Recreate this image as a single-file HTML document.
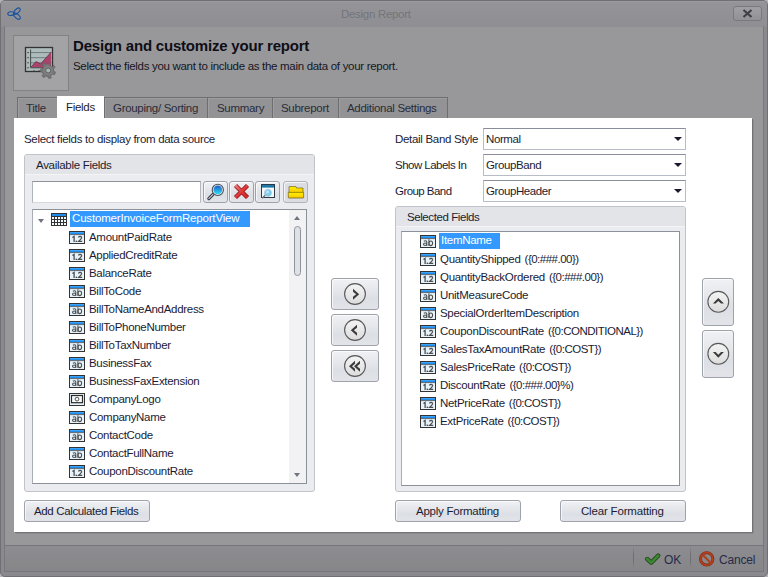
<!DOCTYPE html>
<html><head><meta charset="utf-8">
<style>
*{box-sizing:border-box;margin:0;padding:0}
html,body{width:768px;height:577px;overflow:hidden;background:#b4b4b8}
body{font-family:"Liberation Sans",sans-serif;font-size:11.5px;letter-spacing:-0.3px;color:#1a1c34;position:relative}
.a{position:absolute}
.t{position:absolute;white-space:nowrap;line-height:14px}
#win{left:0;top:0;width:768px;height:577px;border-radius:5px;background:#8a8a8e;border:1px solid #707074}
#title{left:1px;top:1px;width:766px;height:26px;border-radius:4px 4px 0 0;background:linear-gradient(#9c9ca0,#949498 8%,#8f8f93)}
#frameL{left:4px;top:26px;width:1px;height:546px;background:#7a7a7e}
#frameR{left:763px;top:26px;width:1px;height:546px;background:#7a7a7e}
#body{left:5px;top:27px;width:758px;height:518px;background:#98989b}
#foot{left:5px;top:545px;width:758px;height:27px;background:linear-gradient(#8d8d91,#868689);border-top:1px solid #77777b;border-bottom:1px solid #77777b}
#frameB{left:4px;top:571px;width:760px;height:1px;background:#7a7a7e}
.tab{position:absolute;top:97px;height:21px;background:#939396;border:1px solid #6e6e72;border-bottom:none;color:#2a2c38;box-shadow:inset 1px 1px 0 #9e9ea2}
.tab span{position:absolute;top:3px;white-space:nowrap;line-height:14px}
#panel{left:14px;top:118px;width:738px;height:414px;background:#fff;box-shadow:1px 1px 0 #727276,2px 2px 0 #8c8c90}
.grp{position:absolute;border:1px solid #c0c3ca;border-radius:3px;background:#ebecf0}
.grph{position:absolute;left:0;top:0;right:0;height:20px;background:#e3e4e8;border-bottom:1px solid #f4f4f6;border-radius:2px 2px 0 0}
.box{position:absolute;background:#fff;border:1px solid #a9adb6;border-top-color:#8c9099;border-right-color:#8c9099;border-bottom-color:#8c9099}
.btn{position:absolute;border:1px solid #9ea2aa;border-radius:3px;background:linear-gradient(#f0f1f4,#e6e8ec 35%,#dcdfe5 65%,#e2e4e9);box-shadow:inset 1px 1px 0 rgba(255,255,255,0.7)}
.btn span{position:absolute;white-space:nowrap;line-height:14px}
.dd{position:absolute;left:483px;width:203px;height:22px;background:#fff;border:1px solid #b8bcc6;border-top-color:#8a8e9a}
.dd span{position:absolute;left:2px;letter-spacing:-0.4px;top:3px;white-space:nowrap;line-height:14px}
.dd i{position:absolute;left:190px;top:8px;width:0;height:0;border-left:4px solid transparent;border-right:4px solid transparent;border-top:4px solid #1a1a2e}
.row{position:absolute;height:18px}
.row svg{position:absolute;left:0;top:3px}
.row span{position:absolute;left:20px;top:2px;white-space:nowrap;line-height:14px}
.sel{background:#3399ff;color:#fff;padding:0 0 0 2px;width:61px;left:19px!important;top:1px!important;height:16px;line-height:15px!important}
</style></head><body>
<div id="win" class="a"></div>
<div id="title" class="a"></div>
<div id="body" class="a"></div>
<div id="frameL" class="a"></div>
<div id="frameR" class="a"></div>
<div id="foot" class="a"></div>

<!-- logo -->
<svg class="a" style="left:4px;top:4px" width="20" height="20" viewBox="0 0 20 20">
 <g fill="none" stroke="#1a52a0" stroke-width="1.3" transform="translate(10 9.6) scale(0.87) translate(-10 -9.4)">
  <ellipse cx="13.3" cy="6.6" rx="4.6" ry="2.3" transform="rotate(-44 13.3 6.6)"/>
  <ellipse cx="13.3" cy="12.3" rx="4.7" ry="2.3" transform="rotate(42 13.3 12.3)"/>
  <ellipse cx="6.6" cy="9.4" rx="3.8" ry="2.1" transform="rotate(-6 6.6 9.4)"/>
 </g>
</svg>
<div class="t" style="left:341px;top:7px;color:#74747a;font-size:11.5px">Design Report</div>
<!-- close -->
<div class="a" style="left:733px;top:6px;width:29px;height:15px;border:1px solid #7a7a7e;border-radius:3px;background:linear-gradient(#a0a0a4,#929296)"></div>
<svg class="a" style="left:742px;top:9px" width="11" height="9" viewBox="0 0 11 9"><path d="M1.5 1 L9.5 8 M9.5 1 L1.5 8" stroke="#404048" stroke-width="2.3"/></svg>

<!-- header -->
<div class="a" style="left:13px;top:35px;width:56px;height:56px;background:#a3a3a6;border:1px solid #828286"></div>
<svg class="a" style="left:24px;top:46px" width="34" height="34" viewBox="0 0 34 34">
 <rect x="1.5" y="1.5" width="27" height="24" fill="#aebcbc" stroke="#333" stroke-width="1.3"/>
 <path d="M6.5 6.6 H27.5 M6.5 11.7 H27.5 M6.5 16.8 H27.5" stroke="#5e6a6a" stroke-width="0.8"/>
 <path d="M3.2 6.6 H5 M3.2 11.7 H5 M3.2 16.8 H5 M3.2 21.8 H5 M10 24 V25 M15 24 V25" stroke="#444" stroke-width="0.9"/>
 <path d="M7 21 L12 15.5 L16.5 18 L27 6.2 V21.5 H7 Z" fill="#a8446c"/>
 <path d="M7 21 L12 15.5 L16.5 18 L27 6.2" fill="none" stroke="#5a2a40" stroke-width="0.7"/>
 <path d="M6.6 3.5 V21.8 H27.5" fill="none" stroke="#3a4040" stroke-width="0.9"/>
 <g transform="translate(24.2 24.5) scale(0.88)">
  <path d="M-1.6 -8 H1.6 L2 -5.4 L4.3 -4.4 L6.3 -6 L8 -3.7 L6 -1.8 L6.3 0.6 L8.5 2 L7.2 4.8 L4.7 4.3 L3 6.2 L3.5 8.6 L0.5 9 L-0.6 6.8 L-3 6.4 L-4.8 8.2 L-7.2 6.3 L-5.8 4.2 L-6.6 1.9 L-8.8 1.3 L-8.6 -1.8 L-6.2 -2.3 L-5.4 -4.6 L-6.8 -6.7 L-4.2 -8.2 L-2.4 -6.4 Z" fill="#767676" stroke="#5a5a5a" stroke-width="0.6"/>
  <circle cx="0" cy="0" r="5.4" fill="#808080"/>
  <circle cx="0" cy="0" r="2.8" fill="#a8b8b8" stroke="#4a4a4a" stroke-width="0.8"/>
 </g>
</svg>
<div class="t" style="left:73px;top:37px;font-size:15px;font-weight:bold;letter-spacing:-0.2px;color:#0e0e16;line-height:18px">Design and customize your report</div>
<div class="t" style="left:73px;top:59px;color:#16161e">Select the fields you want to include as the main data of your report.</div>

<!-- tabs -->
<div class="tab" style="left:17px;width:41px"><span style="left:8px">Title</span></div>
<div class="tab" style="left:104px;width:104px"><span style="left:8px">Grouping/ Sorting</span></div>
<div class="tab" style="left:207px;width:66px"><span style="left:9px">Summary</span></div>
<div class="tab" style="left:272px;width:67px"><span style="left:8px">Subreport</span></div>
<div class="tab" style="left:338px;width:110px"><span style="left:8px">Additional Settings</span></div>
<div class="a" style="left:57px;top:96px;width:47px;height:23px;background:#fff"></div>
<div class="t" style="left:66px;top:100px;color:#1c1e2a">Fields</div>

<div id="panel" class="a"></div>

<div class="t" style="left:24px;top:132px">Select fields to display from data source</div>

<!-- Available fields group -->
<div class="grp" style="left:24px;top:154px;width:291px;height:338px"><div class="grph"></div></div>
<div class="t" style="left:36px;top:158px">Available Fields</div>
<div class="box" style="left:32px;top:181px;width:169px;height:22px;border-color:#8e929b #b4b8c0 #d6d8de #b0b4bc"></div>
<div class="btn" style="left:203px;top:181px;width:25px;height:22px"></div>
<div class="btn" style="left:229px;top:181px;width:25px;height:22px"></div>
<div class="btn" style="left:255px;top:181px;width:25px;height:22px"></div>
<div class="btn" style="left:283px;top:181px;width:25px;height:22px;background:#dcdde2;border-color:#b0b3ba"></div>
<!-- toolbar icons -->
<svg class="a" style="left:203px;top:181px" width="26" height="22" viewBox="0 0 26 22">
 <defs><linearGradient id="lens" x1="0" y1="0" x2="0" y2="1"><stop offset="0" stop-color="#1a5ac8"/><stop offset="1" stop-color="#2ee0f8"/></linearGradient>
 <linearGradient id="red" x1="0" y1="0" x2="1" y2="1"><stop offset="0" stop-color="#f08080"/><stop offset="0.5" stop-color="#e03838"/><stop offset="1" stop-color="#d02828"/></linearGradient>
 <linearGradient id="fold" x1="0" y1="0" x2="0" y2="1"><stop offset="0" stop-color="#fff000"/><stop offset="0.45" stop-color="#f0a000"/><stop offset="0.55" stop-color="#ffe000"/><stop offset="1" stop-color="#f8d000"/></linearGradient></defs>
 <path d="M5.8 17.6 L10 13.4" stroke="#2a3038" stroke-width="3" stroke-linecap="round"/>
 <path d="M5.8 17.6 L10 13.4" stroke="#c8d0d8" stroke-width="1.2" stroke-linecap="round"/>
 <circle cx="14.8" cy="8.9" r="5.6" fill="#e8eaee" stroke="#4a5058" stroke-width="1.1"/>
 <circle cx="14.8" cy="8.9" r="4.3" fill="url(#lens)"/>
</svg>
<svg class="a" style="left:229px;top:181px" width="26" height="22" viewBox="0 0 26 22">
 <path d="M6.5 4.5 L18.5 16.5 M18.5 4.5 L6.5 16.5" stroke="#981818" stroke-width="4.4"/>
 <path d="M6.5 4.5 L18.5 16.5 M18.5 4.5 L6.5 16.5" stroke="url(#red)" stroke-width="2.6"/>
</svg>
<svg class="a" style="left:255px;top:181px" width="26" height="22" viewBox="0 0 26 22">
 <rect x="6.5" y="3.5" width="13" height="13" fill="#f6f8fa" stroke="#2c3a48"/>
 <rect x="7" y="4" width="12" height="2.6" fill="#1a78a8"/>
 <path d="M7.2 17.2 L10.5 14" stroke="#6a7078" stroke-width="1.6"/>
 <circle cx="13" cy="11.8" r="3.6" fill="#7ccaec" stroke="#a8c8d8" stroke-width="0.6"/>
 <circle cx="12.4" cy="11" r="1.6" fill="#b8e6f8"/>
</svg>
<svg class="a" style="left:283px;top:181px" width="26" height="22" viewBox="0 0 26 22">
 <defs><linearGradient id="fb" x1="0" y1="0" x2="0" y2="1"><stop offset="0" stop-color="#fff400"/><stop offset="1" stop-color="#f0a000"/></linearGradient>
 <linearGradient id="ff" x1="0" y1="0" x2="0" y2="1"><stop offset="0" stop-color="#fff000"/><stop offset="1" stop-color="#f8c800"/></linearGradient></defs>
 <path d="M6 5.6 H13 L13.6 7 H20 V16.8 H6 Z" fill="url(#fb)" stroke="#5a4a10" stroke-width="0.6"/>
 <path d="M5.2 11.4 H20.6 V16.9 H5.4 Z" fill="url(#ff)" stroke="#6a5a10" stroke-width="0.6"/>
</svg>
<!-- tree -->
<div class="box" style="left:32px;top:209px;width:275px;height:275px"></div>
<div class="a" style="left:289px;top:210px;width:17px;height:273px;background:#f2f2f4"></div>
<div class="a" style="left:294px;top:216px;width:0;height:0;border-left:3.5px solid transparent;border-right:3.5px solid transparent;border-bottom:4px solid #6e7480"></div>
<div class="a" style="left:294px;top:226px;width:7px;height:50px;border:1px solid #8e949e;border-radius:4px;background:#dfe1e5"></div>
<div class="a" style="left:294px;top:473px;width:0;height:0;border-left:3.5px solid transparent;border-right:3.5px solid transparent;border-top:4px solid #6e7480"></div>

<div class="a" style="left:38px;top:219px;width:0;height:0;border-left:3.5px solid transparent;border-right:3.5px solid transparent;border-top:4px solid #6e7480"></div>
<svg class="a" style="left:51px;top:213px" width="16" height="13" viewBox="0 0 16 13"><rect x="0" y="0" width="16" height="13" fill="#333"/><rect x="1" y="1" width="14" height="2" fill="#1e8cec"/><rect x="1" y="4" width="2" height="2" fill="#f4fbff"/><rect x="4" y="4" width="2" height="2" fill="#f4fbff"/><rect x="7" y="4" width="2" height="2" fill="#f4fbff"/><rect x="10" y="4" width="2" height="2" fill="#f4fbff"/><rect x="13" y="4" width="2" height="2" fill="#f4fbff"/><rect x="1" y="7" width="2" height="2" fill="#f4fbff"/><rect x="4" y="7" width="2" height="2" fill="#f4fbff"/><rect x="7" y="7" width="2" height="2" fill="#f4fbff"/><rect x="10" y="7" width="2" height="2" fill="#f4fbff"/><rect x="13" y="7" width="2" height="2" fill="#f4fbff"/><rect x="1" y="10" width="2" height="2" fill="#f4fbff"/><rect x="4" y="10" width="2" height="2" fill="#f4fbff"/><rect x="7" y="10" width="2" height="2" fill="#f4fbff"/><rect x="10" y="10" width="2" height="2" fill="#f4fbff"/><rect x="13" y="10" width="2" height="2" fill="#f4fbff"/></svg>
<div class="t" style="left:70px;top:211px;width:180px;height:16px;line-height:15px;letter-spacing:-0.17px;background:#3399ff;color:#fff;padding:0 0 0 2px">CustomerInvoiceFormReportView</div>
<div class="row" style="left:69px;top:228px"><svg style="top:3px" width="16" height="13" viewBox="0 0 16 13"><rect x="0.5" y="0.5" width="15" height="12" fill="#e8f4fc" stroke="#333"/><rect x="1" y="1" width="14" height="2.3" fill="#1e8cec"/><rect x="1" y="1" width="14" height="0.8" fill="#48a8f8"/><path d="M1 3.6 H15" stroke="#3a3a3a" stroke-width="0.7"/><path d="M3.4 6.5 L5.1 5.4 V11" fill="none" stroke="#4e4e4e" stroke-width="1.3"/><rect x="6.6" y="9.6" width="1.4" height="1.4" fill="#4e4e4e"/><path d="M9.3 6.4 Q10.1 5.4 11.2 5.4 Q12.8 5.5 12.6 6.9 Q12.4 8 9.7 10.3 H13.2" fill="none" stroke="#4e4e4e" stroke-width="1.2"/></svg><span>AmountPaidRate</span></div>
<div class="row" style="left:69px;top:246px"><svg style="top:3px" width="16" height="13" viewBox="0 0 16 13"><rect x="0.5" y="0.5" width="15" height="12" fill="#e8f4fc" stroke="#333"/><rect x="1" y="1" width="14" height="2.3" fill="#1e8cec"/><rect x="1" y="1" width="14" height="0.8" fill="#48a8f8"/><path d="M1 3.6 H15" stroke="#3a3a3a" stroke-width="0.7"/><path d="M3.4 6.5 L5.1 5.4 V11" fill="none" stroke="#4e4e4e" stroke-width="1.3"/><rect x="6.6" y="9.6" width="1.4" height="1.4" fill="#4e4e4e"/><path d="M9.3 6.4 Q10.1 5.4 11.2 5.4 Q12.8 5.5 12.6 6.9 Q12.4 8 9.7 10.3 H13.2" fill="none" stroke="#4e4e4e" stroke-width="1.2"/></svg><span>AppliedCreditRate</span></div>
<div class="row" style="left:69px;top:264px"><svg style="top:3px" width="16" height="13" viewBox="0 0 16 13"><rect x="0.5" y="0.5" width="15" height="12" fill="#e8f4fc" stroke="#333"/><rect x="1" y="1" width="14" height="2.3" fill="#1e8cec"/><rect x="1" y="1" width="14" height="0.8" fill="#48a8f8"/><path d="M1 3.6 H15" stroke="#3a3a3a" stroke-width="0.7"/><path d="M3.4 6.5 L5.1 5.4 V11" fill="none" stroke="#4e4e4e" stroke-width="1.3"/><rect x="6.6" y="9.6" width="1.4" height="1.4" fill="#4e4e4e"/><path d="M9.3 6.4 Q10.1 5.4 11.2 5.4 Q12.8 5.5 12.6 6.9 Q12.4 8 9.7 10.3 H13.2" fill="none" stroke="#4e4e4e" stroke-width="1.2"/></svg><span>BalanceRate</span></div>
<div class="row" style="left:69px;top:282px"><svg style="top:3px" width="16" height="13" viewBox="0 0 16 13"><rect x="0.5" y="0.5" width="15" height="12" fill="#e8f4fc" stroke="#333"/><rect x="1" y="1" width="14" height="2.3" fill="#1e8cec"/><rect x="1" y="1" width="14" height="0.8" fill="#48a8f8"/><path d="M1 3.6 H15" stroke="#3a3a3a" stroke-width="0.7"/><path d="M3.8 6.2 Q4.7 5.6 5.6 5.7 Q6.8 5.9 6.8 7.1 V11" fill="none" stroke="#4e4e4e" stroke-width="1.05"/><ellipse cx="5.1" cy="9.2" rx="1.6" ry="1.3" fill="none" stroke="#4e4e4e" stroke-width="1.05"/><path d="M8.9 4.2 V11" fill="none" stroke="#4e4e4e" stroke-width="1.05"/><ellipse cx="10.8" cy="8.3" rx="1.8" ry="2.3" fill="none" stroke="#4e4e4e" stroke-width="1.05"/></svg><span>BillToCode</span></div>
<div class="row" style="left:69px;top:300px"><svg style="top:3px" width="16" height="13" viewBox="0 0 16 13"><rect x="0.5" y="0.5" width="15" height="12" fill="#e8f4fc" stroke="#333"/><rect x="1" y="1" width="14" height="2.3" fill="#1e8cec"/><rect x="1" y="1" width="14" height="0.8" fill="#48a8f8"/><path d="M1 3.6 H15" stroke="#3a3a3a" stroke-width="0.7"/><path d="M3.8 6.2 Q4.7 5.6 5.6 5.7 Q6.8 5.9 6.8 7.1 V11" fill="none" stroke="#4e4e4e" stroke-width="1.05"/><ellipse cx="5.1" cy="9.2" rx="1.6" ry="1.3" fill="none" stroke="#4e4e4e" stroke-width="1.05"/><path d="M8.9 4.2 V11" fill="none" stroke="#4e4e4e" stroke-width="1.05"/><ellipse cx="10.8" cy="8.3" rx="1.8" ry="2.3" fill="none" stroke="#4e4e4e" stroke-width="1.05"/></svg><span>BillToNameAndAddress</span></div>
<div class="row" style="left:69px;top:318px"><svg style="top:3px" width="16" height="13" viewBox="0 0 16 13"><rect x="0.5" y="0.5" width="15" height="12" fill="#e8f4fc" stroke="#333"/><rect x="1" y="1" width="14" height="2.3" fill="#1e8cec"/><rect x="1" y="1" width="14" height="0.8" fill="#48a8f8"/><path d="M1 3.6 H15" stroke="#3a3a3a" stroke-width="0.7"/><path d="M3.8 6.2 Q4.7 5.6 5.6 5.7 Q6.8 5.9 6.8 7.1 V11" fill="none" stroke="#4e4e4e" stroke-width="1.05"/><ellipse cx="5.1" cy="9.2" rx="1.6" ry="1.3" fill="none" stroke="#4e4e4e" stroke-width="1.05"/><path d="M8.9 4.2 V11" fill="none" stroke="#4e4e4e" stroke-width="1.05"/><ellipse cx="10.8" cy="8.3" rx="1.8" ry="2.3" fill="none" stroke="#4e4e4e" stroke-width="1.05"/></svg><span>BillToPhoneNumber</span></div>
<div class="row" style="left:69px;top:336px"><svg style="top:3px" width="16" height="13" viewBox="0 0 16 13"><rect x="0.5" y="0.5" width="15" height="12" fill="#e8f4fc" stroke="#333"/><rect x="1" y="1" width="14" height="2.3" fill="#1e8cec"/><rect x="1" y="1" width="14" height="0.8" fill="#48a8f8"/><path d="M1 3.6 H15" stroke="#3a3a3a" stroke-width="0.7"/><path d="M3.8 6.2 Q4.7 5.6 5.6 5.7 Q6.8 5.9 6.8 7.1 V11" fill="none" stroke="#4e4e4e" stroke-width="1.05"/><ellipse cx="5.1" cy="9.2" rx="1.6" ry="1.3" fill="none" stroke="#4e4e4e" stroke-width="1.05"/><path d="M8.9 4.2 V11" fill="none" stroke="#4e4e4e" stroke-width="1.05"/><ellipse cx="10.8" cy="8.3" rx="1.8" ry="2.3" fill="none" stroke="#4e4e4e" stroke-width="1.05"/></svg><span>BillToTaxNumber</span></div>
<div class="row" style="left:69px;top:354px"><svg style="top:3px" width="16" height="13" viewBox="0 0 16 13"><rect x="0.5" y="0.5" width="15" height="12" fill="#e8f4fc" stroke="#333"/><rect x="1" y="1" width="14" height="2.3" fill="#1e8cec"/><rect x="1" y="1" width="14" height="0.8" fill="#48a8f8"/><path d="M1 3.6 H15" stroke="#3a3a3a" stroke-width="0.7"/><path d="M3.8 6.2 Q4.7 5.6 5.6 5.7 Q6.8 5.9 6.8 7.1 V11" fill="none" stroke="#4e4e4e" stroke-width="1.05"/><ellipse cx="5.1" cy="9.2" rx="1.6" ry="1.3" fill="none" stroke="#4e4e4e" stroke-width="1.05"/><path d="M8.9 4.2 V11" fill="none" stroke="#4e4e4e" stroke-width="1.05"/><ellipse cx="10.8" cy="8.3" rx="1.8" ry="2.3" fill="none" stroke="#4e4e4e" stroke-width="1.05"/></svg><span>BusinessFax</span></div>
<div class="row" style="left:69px;top:372px"><svg style="top:3px" width="16" height="13" viewBox="0 0 16 13"><rect x="0.5" y="0.5" width="15" height="12" fill="#e8f4fc" stroke="#333"/><rect x="1" y="1" width="14" height="2.3" fill="#1e8cec"/><rect x="1" y="1" width="14" height="0.8" fill="#48a8f8"/><path d="M1 3.6 H15" stroke="#3a3a3a" stroke-width="0.7"/><path d="M3.8 6.2 Q4.7 5.6 5.6 5.7 Q6.8 5.9 6.8 7.1 V11" fill="none" stroke="#4e4e4e" stroke-width="1.05"/><ellipse cx="5.1" cy="9.2" rx="1.6" ry="1.3" fill="none" stroke="#4e4e4e" stroke-width="1.05"/><path d="M8.9 4.2 V11" fill="none" stroke="#4e4e4e" stroke-width="1.05"/><ellipse cx="10.8" cy="8.3" rx="1.8" ry="2.3" fill="none" stroke="#4e4e4e" stroke-width="1.05"/></svg><span>BusinessFaxExtension</span></div>
<div class="row" style="left:69px;top:390px"><svg style="top:3px" width="16" height="13" viewBox="0 0 16 13"><rect x="0.5" y="0.5" width="15" height="12" fill="#e8f4fc" stroke="#333"/><rect x="2.5" y="2.5" width="11" height="7.2" fill="#fafafa" stroke="#2a2a2a" stroke-width="1.2"/><circle cx="8" cy="6.1" r="1.9" fill="none" stroke="#555" stroke-width="1"/></svg><span>CompanyLogo</span></div>
<div class="row" style="left:69px;top:408px"><svg style="top:3px" width="16" height="13" viewBox="0 0 16 13"><rect x="0.5" y="0.5" width="15" height="12" fill="#e8f4fc" stroke="#333"/><rect x="1" y="1" width="14" height="2.3" fill="#1e8cec"/><rect x="1" y="1" width="14" height="0.8" fill="#48a8f8"/><path d="M1 3.6 H15" stroke="#3a3a3a" stroke-width="0.7"/><path d="M3.8 6.2 Q4.7 5.6 5.6 5.7 Q6.8 5.9 6.8 7.1 V11" fill="none" stroke="#4e4e4e" stroke-width="1.05"/><ellipse cx="5.1" cy="9.2" rx="1.6" ry="1.3" fill="none" stroke="#4e4e4e" stroke-width="1.05"/><path d="M8.9 4.2 V11" fill="none" stroke="#4e4e4e" stroke-width="1.05"/><ellipse cx="10.8" cy="8.3" rx="1.8" ry="2.3" fill="none" stroke="#4e4e4e" stroke-width="1.05"/></svg><span>CompanyName</span></div>
<div class="row" style="left:69px;top:426px"><svg style="top:3px" width="16" height="13" viewBox="0 0 16 13"><rect x="0.5" y="0.5" width="15" height="12" fill="#e8f4fc" stroke="#333"/><rect x="1" y="1" width="14" height="2.3" fill="#1e8cec"/><rect x="1" y="1" width="14" height="0.8" fill="#48a8f8"/><path d="M1 3.6 H15" stroke="#3a3a3a" stroke-width="0.7"/><path d="M3.8 6.2 Q4.7 5.6 5.6 5.7 Q6.8 5.9 6.8 7.1 V11" fill="none" stroke="#4e4e4e" stroke-width="1.05"/><ellipse cx="5.1" cy="9.2" rx="1.6" ry="1.3" fill="none" stroke="#4e4e4e" stroke-width="1.05"/><path d="M8.9 4.2 V11" fill="none" stroke="#4e4e4e" stroke-width="1.05"/><ellipse cx="10.8" cy="8.3" rx="1.8" ry="2.3" fill="none" stroke="#4e4e4e" stroke-width="1.05"/></svg><span>ContactCode</span></div>
<div class="row" style="left:69px;top:444px"><svg style="top:3px" width="16" height="13" viewBox="0 0 16 13"><rect x="0.5" y="0.5" width="15" height="12" fill="#e8f4fc" stroke="#333"/><rect x="1" y="1" width="14" height="2.3" fill="#1e8cec"/><rect x="1" y="1" width="14" height="0.8" fill="#48a8f8"/><path d="M1 3.6 H15" stroke="#3a3a3a" stroke-width="0.7"/><path d="M3.8 6.2 Q4.7 5.6 5.6 5.7 Q6.8 5.9 6.8 7.1 V11" fill="none" stroke="#4e4e4e" stroke-width="1.05"/><ellipse cx="5.1" cy="9.2" rx="1.6" ry="1.3" fill="none" stroke="#4e4e4e" stroke-width="1.05"/><path d="M8.9 4.2 V11" fill="none" stroke="#4e4e4e" stroke-width="1.05"/><ellipse cx="10.8" cy="8.3" rx="1.8" ry="2.3" fill="none" stroke="#4e4e4e" stroke-width="1.05"/></svg><span>ContactFullName</span></div>
<div class="row" style="left:69px;top:462px"><svg style="top:3px" width="16" height="13" viewBox="0 0 16 13"><rect x="0.5" y="0.5" width="15" height="12" fill="#e8f4fc" stroke="#333"/><rect x="1" y="1" width="14" height="2.3" fill="#1e8cec"/><rect x="1" y="1" width="14" height="0.8" fill="#48a8f8"/><path d="M1 3.6 H15" stroke="#3a3a3a" stroke-width="0.7"/><path d="M3.4 6.5 L5.1 5.4 V11" fill="none" stroke="#4e4e4e" stroke-width="1.3"/><rect x="6.6" y="9.6" width="1.4" height="1.4" fill="#4e4e4e"/><path d="M9.3 6.4 Q10.1 5.4 11.2 5.4 Q12.8 5.5 12.6 6.9 Q12.4 8 9.7 10.3 H13.2" fill="none" stroke="#4e4e4e" stroke-width="1.2"/></svg><span>CouponDiscountRate</span></div>

<div class="btn" style="left:24px;top:500px;width:126px;height:22px"><span style="left:9px;top:3px;letter-spacing:-0.36px">Add Calculated Fields</span></div>

<!-- middle arrow buttons -->
<div class="btn" style="left:331px;top:278px;width:48px;height:32px"></div>
<div class="btn" style="left:331px;top:314px;width:48px;height:32px"></div>
<div class="btn" style="left:331px;top:350px;width:48px;height:32px"></div>
<svg class="a" style="left:343px;top:283px" width="24" height="22" viewBox="0 0 24 22"><defs><linearGradient id="cg" x1="0" y1="0" x2="0" y2="1"><stop offset="0" stop-color="#f4f4f4"/><stop offset="1" stop-color="#dcdcdc"/></linearGradient></defs>
 <circle cx="12" cy="11" r="10.4" fill="url(#cg)" stroke="#595959" stroke-width="1.1"/>
 <path d="M10 5.8 L16.2 11.3 L10 16.8 V13.8 L13.2 11.3 L10 8.8 Z" fill="#3a3a3a"/>
</svg>
<svg class="a" style="left:343px;top:319px" width="24" height="22" viewBox="0 0 24 22">
 <circle cx="12" cy="11" r="10.4" fill="url(#cg)" stroke="#595959" stroke-width="1.1"/>
 <path d="M14 5.8 L7.8 11.3 L14 16.8 V13.8 L10.8 11.3 L14 8.8 Z" fill="#3a3a3a"/>
</svg>
<svg class="a" style="left:343px;top:355px" width="24" height="22" viewBox="0 0 24 22">
 <circle cx="12" cy="11" r="10.4" fill="url(#cg)" stroke="#595959" stroke-width="1.1"/>
 <path d="M12 5.8 L6 11.3 L12 16.8 V13.8 L9 11.3 L12 8.8 Z M17 5.8 L11 11.3 L17 16.8 V13.8 L14 11.3 L17 8.8 Z" fill="#3a3a3a"/>
</svg>

<!-- right side -->
<div class="t" style="left:395px;top:132px">Detail Band Style</div>
<div class="t" style="left:395px;top:158px;letter-spacing:-0.52px">Show Labels In</div>
<div class="t" style="left:395px;top:184px;letter-spacing:-0.55px">Group Band</div>
<div class="dd" style="top:128px"><span>Normal</span><i></i></div>
<div class="dd" style="top:154px"><span>GroupBand</span><i></i></div>
<div class="dd" style="top:180px"><span>GroupHeader</span><i></i></div>

<div class="grp" style="left:395px;top:206px;width:291px;height:286px"><div class="grph"></div></div>
<div class="t" style="left:407px;top:210px;letter-spacing:-0.42px">Selected Fields</div>
<div class="box" style="left:401px;top:231px;width:279px;height:255px"></div>
<div class="row" style="left:420px;top:232px"><svg width="16" height="13" viewBox="0 0 16 13"><rect x="0.5" y="0.5" width="15" height="12" fill="#e8f4fc" stroke="#333"/><rect x="1" y="1" width="14" height="2.3" fill="#1e8cec"/><rect x="1" y="1" width="14" height="0.8" fill="#48a8f8"/><path d="M1 3.6 H15" stroke="#3a3a3a" stroke-width="0.7"/><path d="M3.8 6.2 Q4.7 5.6 5.6 5.7 Q6.8 5.9 6.8 7.1 V11" fill="none" stroke="#4e4e4e" stroke-width="1.05"/><ellipse cx="5.1" cy="9.2" rx="1.6" ry="1.3" fill="none" stroke="#4e4e4e" stroke-width="1.05"/><path d="M8.9 4.2 V11" fill="none" stroke="#4e4e4e" stroke-width="1.05"/><ellipse cx="10.8" cy="8.3" rx="1.8" ry="2.3" fill="none" stroke="#4e4e4e" stroke-width="1.05"/></svg><span class="sel">ItemName</span></div>
<div class="row" style="left:420px;top:250px"><svg width="16" height="13" viewBox="0 0 16 13"><rect x="0.5" y="0.5" width="15" height="12" fill="#e8f4fc" stroke="#333"/><rect x="1" y="1" width="14" height="2.3" fill="#1e8cec"/><rect x="1" y="1" width="14" height="0.8" fill="#48a8f8"/><path d="M1 3.6 H15" stroke="#3a3a3a" stroke-width="0.7"/><path d="M3.4 6.5 L5.1 5.4 V11" fill="none" stroke="#4e4e4e" stroke-width="1.3"/><rect x="6.6" y="9.6" width="1.4" height="1.4" fill="#4e4e4e"/><path d="M9.3 6.4 Q10.1 5.4 11.2 5.4 Q12.8 5.5 12.6 6.9 Q12.4 8 9.7 10.3 H13.2" fill="none" stroke="#4e4e4e" stroke-width="1.2"/></svg><span>QuantityShipped<b style="font-weight:normal;margin-left:4px;letter-spacing:-0.5px">({0:###.00})</b></span></div>
<div class="row" style="left:420px;top:268px"><svg width="16" height="13" viewBox="0 0 16 13"><rect x="0.5" y="0.5" width="15" height="12" fill="#e8f4fc" stroke="#333"/><rect x="1" y="1" width="14" height="2.3" fill="#1e8cec"/><rect x="1" y="1" width="14" height="0.8" fill="#48a8f8"/><path d="M1 3.6 H15" stroke="#3a3a3a" stroke-width="0.7"/><path d="M3.4 6.5 L5.1 5.4 V11" fill="none" stroke="#4e4e4e" stroke-width="1.3"/><rect x="6.6" y="9.6" width="1.4" height="1.4" fill="#4e4e4e"/><path d="M9.3 6.4 Q10.1 5.4 11.2 5.4 Q12.8 5.5 12.6 6.9 Q12.4 8 9.7 10.3 H13.2" fill="none" stroke="#4e4e4e" stroke-width="1.2"/></svg><span>QuantityBackOrdered<b style="font-weight:normal;margin-left:4px;letter-spacing:-0.5px">({0:###.00})</b></span></div>
<div class="row" style="left:420px;top:286px"><svg width="16" height="13" viewBox="0 0 16 13"><rect x="0.5" y="0.5" width="15" height="12" fill="#e8f4fc" stroke="#333"/><rect x="1" y="1" width="14" height="2.3" fill="#1e8cec"/><rect x="1" y="1" width="14" height="0.8" fill="#48a8f8"/><path d="M1 3.6 H15" stroke="#3a3a3a" stroke-width="0.7"/><path d="M3.8 6.2 Q4.7 5.6 5.6 5.7 Q6.8 5.9 6.8 7.1 V11" fill="none" stroke="#4e4e4e" stroke-width="1.05"/><ellipse cx="5.1" cy="9.2" rx="1.6" ry="1.3" fill="none" stroke="#4e4e4e" stroke-width="1.05"/><path d="M8.9 4.2 V11" fill="none" stroke="#4e4e4e" stroke-width="1.05"/><ellipse cx="10.8" cy="8.3" rx="1.8" ry="2.3" fill="none" stroke="#4e4e4e" stroke-width="1.05"/></svg><span>UnitMeasureCode<b style="font-weight:normal;margin-left:4px;letter-spacing:-0.5px"></b></span></div>
<div class="row" style="left:420px;top:304px"><svg width="16" height="13" viewBox="0 0 16 13"><rect x="0.5" y="0.5" width="15" height="12" fill="#e8f4fc" stroke="#333"/><rect x="1" y="1" width="14" height="2.3" fill="#1e8cec"/><rect x="1" y="1" width="14" height="0.8" fill="#48a8f8"/><path d="M1 3.6 H15" stroke="#3a3a3a" stroke-width="0.7"/><path d="M3.8 6.2 Q4.7 5.6 5.6 5.7 Q6.8 5.9 6.8 7.1 V11" fill="none" stroke="#4e4e4e" stroke-width="1.05"/><ellipse cx="5.1" cy="9.2" rx="1.6" ry="1.3" fill="none" stroke="#4e4e4e" stroke-width="1.05"/><path d="M8.9 4.2 V11" fill="none" stroke="#4e4e4e" stroke-width="1.05"/><ellipse cx="10.8" cy="8.3" rx="1.8" ry="2.3" fill="none" stroke="#4e4e4e" stroke-width="1.05"/></svg><span>SpecialOrderItemDescription<b style="font-weight:normal;margin-left:4px;letter-spacing:-0.5px"></b></span></div>
<div class="row" style="left:420px;top:322px"><svg width="16" height="13" viewBox="0 0 16 13"><rect x="0.5" y="0.5" width="15" height="12" fill="#e8f4fc" stroke="#333"/><rect x="1" y="1" width="14" height="2.3" fill="#1e8cec"/><rect x="1" y="1" width="14" height="0.8" fill="#48a8f8"/><path d="M1 3.6 H15" stroke="#3a3a3a" stroke-width="0.7"/><path d="M3.4 6.5 L5.1 5.4 V11" fill="none" stroke="#4e4e4e" stroke-width="1.3"/><rect x="6.6" y="9.6" width="1.4" height="1.4" fill="#4e4e4e"/><path d="M9.3 6.4 Q10.1 5.4 11.2 5.4 Q12.8 5.5 12.6 6.9 Q12.4 8 9.7 10.3 H13.2" fill="none" stroke="#4e4e4e" stroke-width="1.2"/></svg><span>CouponDiscountRate<b style="font-weight:normal;margin-left:4px;letter-spacing:-0.5px">({0:CONDITIONAL})</b></span></div>
<div class="row" style="left:420px;top:340px"><svg width="16" height="13" viewBox="0 0 16 13"><rect x="0.5" y="0.5" width="15" height="12" fill="#e8f4fc" stroke="#333"/><rect x="1" y="1" width="14" height="2.3" fill="#1e8cec"/><rect x="1" y="1" width="14" height="0.8" fill="#48a8f8"/><path d="M1 3.6 H15" stroke="#3a3a3a" stroke-width="0.7"/><path d="M3.4 6.5 L5.1 5.4 V11" fill="none" stroke="#4e4e4e" stroke-width="1.3"/><rect x="6.6" y="9.6" width="1.4" height="1.4" fill="#4e4e4e"/><path d="M9.3 6.4 Q10.1 5.4 11.2 5.4 Q12.8 5.5 12.6 6.9 Q12.4 8 9.7 10.3 H13.2" fill="none" stroke="#4e4e4e" stroke-width="1.2"/></svg><span>SalesTaxAmountRate<b style="font-weight:normal;margin-left:4px;letter-spacing:-0.5px">({0:COST})</b></span></div>
<div class="row" style="left:420px;top:358px"><svg width="16" height="13" viewBox="0 0 16 13"><rect x="0.5" y="0.5" width="15" height="12" fill="#e8f4fc" stroke="#333"/><rect x="1" y="1" width="14" height="2.3" fill="#1e8cec"/><rect x="1" y="1" width="14" height="0.8" fill="#48a8f8"/><path d="M1 3.6 H15" stroke="#3a3a3a" stroke-width="0.7"/><path d="M3.4 6.5 L5.1 5.4 V11" fill="none" stroke="#4e4e4e" stroke-width="1.3"/><rect x="6.6" y="9.6" width="1.4" height="1.4" fill="#4e4e4e"/><path d="M9.3 6.4 Q10.1 5.4 11.2 5.4 Q12.8 5.5 12.6 6.9 Q12.4 8 9.7 10.3 H13.2" fill="none" stroke="#4e4e4e" stroke-width="1.2"/></svg><span>SalesPriceRate<b style="font-weight:normal;margin-left:4px;letter-spacing:-0.5px">({0:COST})</b></span></div>
<div class="row" style="left:420px;top:376px"><svg width="16" height="13" viewBox="0 0 16 13"><rect x="0.5" y="0.5" width="15" height="12" fill="#e8f4fc" stroke="#333"/><rect x="1" y="1" width="14" height="2.3" fill="#1e8cec"/><rect x="1" y="1" width="14" height="0.8" fill="#48a8f8"/><path d="M1 3.6 H15" stroke="#3a3a3a" stroke-width="0.7"/><path d="M3.4 6.5 L5.1 5.4 V11" fill="none" stroke="#4e4e4e" stroke-width="1.3"/><rect x="6.6" y="9.6" width="1.4" height="1.4" fill="#4e4e4e"/><path d="M9.3 6.4 Q10.1 5.4 11.2 5.4 Q12.8 5.5 12.6 6.9 Q12.4 8 9.7 10.3 H13.2" fill="none" stroke="#4e4e4e" stroke-width="1.2"/></svg><span>DiscountRate<b style="font-weight:normal;margin-left:4px;letter-spacing:-0.5px">({0:###.00}%)</b></span></div>
<div class="row" style="left:420px;top:394px"><svg width="16" height="13" viewBox="0 0 16 13"><rect x="0.5" y="0.5" width="15" height="12" fill="#e8f4fc" stroke="#333"/><rect x="1" y="1" width="14" height="2.3" fill="#1e8cec"/><rect x="1" y="1" width="14" height="0.8" fill="#48a8f8"/><path d="M1 3.6 H15" stroke="#3a3a3a" stroke-width="0.7"/><path d="M3.4 6.5 L5.1 5.4 V11" fill="none" stroke="#4e4e4e" stroke-width="1.3"/><rect x="6.6" y="9.6" width="1.4" height="1.4" fill="#4e4e4e"/><path d="M9.3 6.4 Q10.1 5.4 11.2 5.4 Q12.8 5.5 12.6 6.9 Q12.4 8 9.7 10.3 H13.2" fill="none" stroke="#4e4e4e" stroke-width="1.2"/></svg><span>NetPriceRate<b style="font-weight:normal;margin-left:4px;letter-spacing:-0.5px">({0:COST})</b></span></div>
<div class="row" style="left:420px;top:412px"><svg width="16" height="13" viewBox="0 0 16 13"><rect x="0.5" y="0.5" width="15" height="12" fill="#e8f4fc" stroke="#333"/><rect x="1" y="1" width="14" height="2.3" fill="#1e8cec"/><rect x="1" y="1" width="14" height="0.8" fill="#48a8f8"/><path d="M1 3.6 H15" stroke="#3a3a3a" stroke-width="0.7"/><path d="M3.4 6.5 L5.1 5.4 V11" fill="none" stroke="#4e4e4e" stroke-width="1.3"/><rect x="6.6" y="9.6" width="1.4" height="1.4" fill="#4e4e4e"/><path d="M9.3 6.4 Q10.1 5.4 11.2 5.4 Q12.8 5.5 12.6 6.9 Q12.4 8 9.7 10.3 H13.2" fill="none" stroke="#4e4e4e" stroke-width="1.2"/></svg><span>ExtPriceRate<b style="font-weight:normal;margin-left:4px;letter-spacing:-0.5px">({0:COST})</b></span></div>

<div class="btn" style="left:395px;top:500px;width:126px;height:22px"><span style="left:20px;top:3px;letter-spacing:-0.25px">Apply Formatting</span></div>
<div class="btn" style="left:560px;top:500px;width:126px;height:22px"><span style="left:20px;top:3px;letter-spacing:-0.18px">Clear Formatting</span></div>

<div class="btn" style="left:702px;top:278px;width:32px;height:48px"></div>
<div class="btn" style="left:702px;top:330px;width:32px;height:48px"></div>
<svg class="a" style="left:707px;top:290px" width="23" height="24" viewBox="0 0 23 24">
 <circle cx="11.3" cy="11.8" r="10.4" fill="url(#cg)" stroke="#595959" stroke-width="1.1"/>
 <path d="M5.9 13.6 L11.3 7.9 L16.9 13.6 H14 L11.3 10.9 L8.6 13.6 Z" fill="#3a3a3a"/>
</svg>
<svg class="a" style="left:707px;top:342px" width="23" height="24" viewBox="0 0 23 24">
 <circle cx="11.3" cy="11.8" r="10.4" fill="url(#cg)" stroke="#595959" stroke-width="1.1"/>
 <path d="M5.9 10 L11.3 15.7 L16.9 10 H14 L11.3 12.7 L8.6 10 Z" fill="#3a3a3a"/>
</svg>

<!-- footer -->
<div class="a" style="left:633px;top:547px;width:1px;height:22px;background:linear-gradient(rgba(110,110,114,0),#6e6e72 35%,#6e6e72 60%,rgba(110,110,114,0))"></div>
<div class="a" style="left:690px;top:547px;width:1px;height:22px;background:linear-gradient(rgba(110,110,114,0),#6e6e72 35%,#6e6e72 60%,rgba(110,110,114,0))"></div>
<svg class="a" style="left:644px;top:553px" width="17" height="13" viewBox="0 0 17 13">
 <path d="M3.2 6 L7.2 9.6 L14.2 2.6" fill="none" stroke="#2c4a26" stroke-width="4.4" stroke-linejoin="round" stroke-linecap="round"/>
 <path d="M3.2 6 L7.2 9.6 L14.2 2.6" fill="none" stroke="#3a8a30" stroke-width="2.6" stroke-linejoin="round" stroke-linecap="round"/>
</svg>
<div class="t" style="left:664px;top:553px;color:#262c48;font-size:12px;letter-spacing:-0.2px">OK</div>
<svg class="a" style="left:698px;top:550px" width="18" height="18" viewBox="0 0 18 18">
 <circle cx="8.7" cy="8.9" r="6.2" fill="none" stroke="#7a3020" stroke-width="3"/>
 <circle cx="8.7" cy="8.9" r="6.2" fill="none" stroke="#b23e1c" stroke-width="1.8"/>
 <path d="M4.6 4.8 L12.8 13" stroke="#b23e1c" stroke-width="2"/>
</svg>
<div class="t" style="left:719px;top:553px;color:#262c48;font-size:12px;letter-spacing:-0.2px">Cancel</div>
</body></html>
